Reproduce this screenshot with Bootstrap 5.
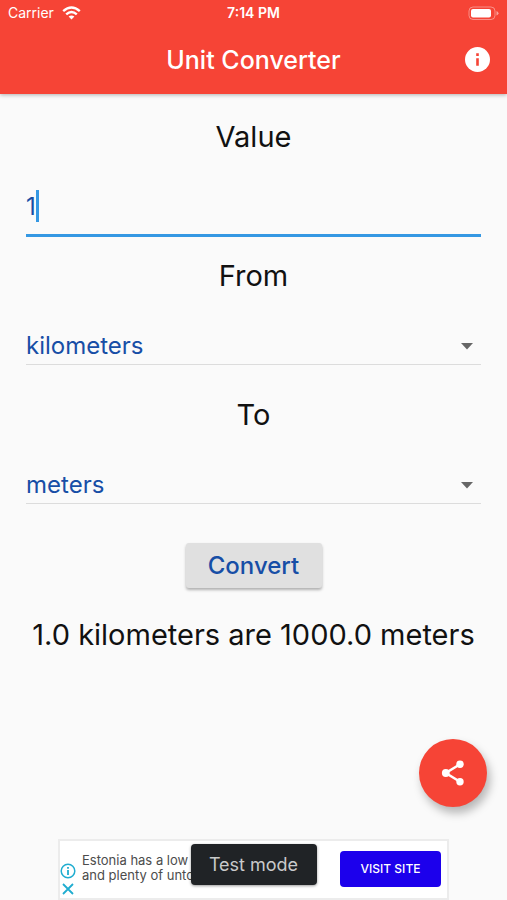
<!DOCTYPE html>
<html lang="en">
<head>
<meta charset="utf-8">
<meta name="viewport" content="width=device-width, initial-scale=1">
<title>Unit Converter</title>
<link href="https://cdn.jsdelivr.net/npm/bootstrap@5.3.0/dist/css/bootstrap.min.css" rel="stylesheet">
<style>
  body { background: #fafafa; color: #111; font-family: Inter, "Liberation Sans", sans-serif; }
  .app-head { background: #f64436; box-shadow: 0 1px 4px rgba(0,0,0,.3); }
  .status { height: 28px; font-size: 14px; line-height: 20px; padding-bottom: 2px; }
  .status > * { flex: 1 1 0; }
  .titlebar { height: 66px; }
  .titlebar h1 { font-size: 25px; line-height: 28px; font-weight: 500; padding-bottom: 2px; }
  .info-btn { right: 17px; top: 19px; line-height: 0; }
  .converter { padding: 23px 26px 0; }
  .big-text { font-size: 29px; line-height: 40px; font-weight: 400; }
  .unit-field { margin-bottom: 30px; }
  .value-field { margin-bottom: 19px; }
  .line-input, .line-select { width: 100%; border: 0; border-radius: 0; background: transparent; color: #174ea6; font-size: 24px; padding: 2px 0 0; outline: 0; display: block; appearance: none; }
  .line-input { height: 60px; margin-top: 20px; border-bottom: 3px solid #3598e3; caret-color: transparent; }
  .line-select { height: 40px; margin-top: 29px; border-bottom: 1px solid #dcdcdc; }
  .text-caret { left: 10px; top: 13px; width: 3px; height: 32px; background: #3598e3; }
  .arrow { right: 8px; bottom: 15px; pointer-events: none; }
  .convert-btn { height: 45px; width: 136px; margin-top: 9px; padding: 0; background: #e0e0e0; color: #174ea6; font-size: 24px; line-height: 45px; font-weight: 500; border: 0; border-radius: 3px; box-shadow: 0 2px 3px rgba(0,0,0,.3); }
  .convert-btn:hover { background: #d6d6d6; color: #174ea6; }
  .result { margin-top: 27px; }
  .share-btn { width: 68px; height: 68px; margin: 0 20px 32px 0; background: #f64436; box-shadow: 3px 6px 10px rgba(0,0,0,.28); }
  .ad-box { width: 391px; max-width: 100%; height: 61px; border: 2px solid #ececec; background: #fff; padding: 0 6px 0 0; }
  .ad-icons { width: 16px; padding-top: 22px; }
  .ad-copy { margin-left: 2px; padding-bottom: 3px; font-size: 13px; line-height: 15px; color: #4c4c4c; }
  .visit { width: 101px; height: 36px; background: #1c00ec; color: #fff; font-size: 12px; font-weight: 500; line-height: 35px; border-radius: 4px; margin-bottom: 2px; }
  .toast-note { left: 50%; transform: translateX(-50%); top: 3px; width: 126px; height: 41px; line-height: 42px; background: #202326; color: #c9cacb; font-size: 18px; border-radius: 4px; box-shadow: 0 1px 3px rgba(0,0,0,.4); }
</style>
</head>
<body>
<div class="min-vh-100 d-flex flex-column">
  <header class="app-head text-white">
    <div class="status d-flex align-items-center px-2">
      <div class="d-flex align-items-center gap-2">
        <span>Carrier</span>
        <svg width="19" height="14" viewBox="0 0 19 14" aria-hidden="true" fill="none" stroke="#fff" stroke-width="2.4"><path d="M1.2 5.2Q9.5-2.2 17.8 5.2M4.2 8.4Q9.5 3.5 14.8 8.4"/><path d="M6.6 10.6Q9.5 8.2 12.4 10.6L9.5 13.6Z" fill="#fff" stroke="none"/></svg>
      </div>
      <div class="text-center fw-semibold">7:14 PM</div>
      <div class="d-flex justify-content-end">
        <svg width="31" height="15" viewBox="0 0 31 15" aria-hidden="true"><rect x="1" y="1" width="26" height="12.500" rx="4" fill="none" stroke="#fff" stroke-opacity=".4"/><rect x="3" y="3" width="20" height="8.500" rx="2" fill="#fff"/><path d="M28.500 5v4.500q2-.8 2-2.250T28.500 5" fill="#fff" fill-opacity=".5"/></svg>
      </div>
    </div>
    <div class="titlebar position-relative d-flex align-items-center justify-content-center">
      <h1 class="m-0">Unit Converter</h1>
      <button type="button" class="info-btn btn p-0 border-0 position-absolute" aria-label="About">
        <svg width="25" height="25" viewBox="0 0 25 25"><circle cx="12.500" cy="12.500" r="12.500" fill="#fff"/><path d="M11.200 11.200h2.600v7.500h-2.600zM11.200 6.300h2.600v2.700h-2.600z" fill="#f64436"/></svg>
      </button>
    </div>
  </header>

  <main class="flex-grow-1 d-flex flex-column">
    <form class="converter text-center">
      <div class="value-field">
        <label class="big-text d-block" for="value">Value</label>
        <div class="position-relative">
          <input class="line-input" id="value" type="text" inputmode="decimal" value="1">
          <span class="text-caret position-absolute" aria-hidden="true"></span>
        </div>
      </div>
      <div class="unit-field">
        <label class="big-text d-block" for="from">From</label>
        <div class="position-relative">
          <select class="line-select" id="from"><option>kilometers</option><option>meters</option></select>
          <svg class="arrow position-absolute" width="12" height="7" viewBox="0 0 12 7" aria-hidden="true"><path d="M0 0h12L6 6.500z" fill="#666"/></svg>
        </div>
      </div>
      <div class="unit-field">
        <label class="big-text d-block" for="to">To</label>
        <div class="position-relative">
          <select class="line-select" id="to"><option>meters</option><option>kilometers</option></select>
          <svg class="arrow position-absolute" width="12" height="7" viewBox="0 0 12 7" aria-hidden="true"><path d="M0 0h12L6 6.500z" fill="#666"/></svg>
        </div>
      </div>
      <button type="button" class="convert-btn btn">Convert</button>
    </form>
    <p class="result big-text text-center mb-0">1.0 kilometers are 1000.0 meters</p>
    <button type="button" class="share-btn btn border-0 p-0 rounded-circle mt-auto align-self-end" aria-label="Share">
      <svg width="24" height="26" viewBox="0 0 24 26"><path d="M19 4.300 4.800 13 19 21.700" fill="none" stroke="#fff" stroke-width="2.500"/><circle cx="19" cy="4.300" r="3.700" fill="#fff"/><circle cx="4.800" cy="13" r="3.900" fill="#fff"/><circle cx="19" cy="21.700" r="3.700" fill="#fff"/></svg>
    </button>
  </main>

  <aside class="ad-box mx-auto position-relative d-flex align-items-center gap-1" aria-label="Advertisement">
    <div class="ad-icons align-self-start d-flex flex-column align-items-center gap-1">
      <svg width="16" height="16" viewBox="0 0 16 16" aria-hidden="true"><circle cx="8" cy="8" r="6.800" fill="none" stroke="#20add0" stroke-width="1.500"/><path d="M8 7v5M8 4v1.800" stroke="#20add0" stroke-width="1.800"/></svg>
      <svg width="12" height="12" viewBox="0 0 12 12" aria-hidden="true"><path d="m1 1 10 10M11 1 1 11" stroke="#20add0" stroke-width="1.800"/></svg>
    </div>
    <div class="ad-copy text-nowrap">Estonia has a low<br>and plenty of unto</div>
    <a href="#" class="visit d-block text-center text-decoration-none ms-auto">VISIT SITE</a>
    <div class="toast-note position-absolute text-center" role="status">Test mode</div>
  </aside>
</div>
<script src="https://cdn.jsdelivr.net/npm/bootstrap@5.3.0/dist/js/bootstrap.bundle.min.js"></script>
</body>
</html>
